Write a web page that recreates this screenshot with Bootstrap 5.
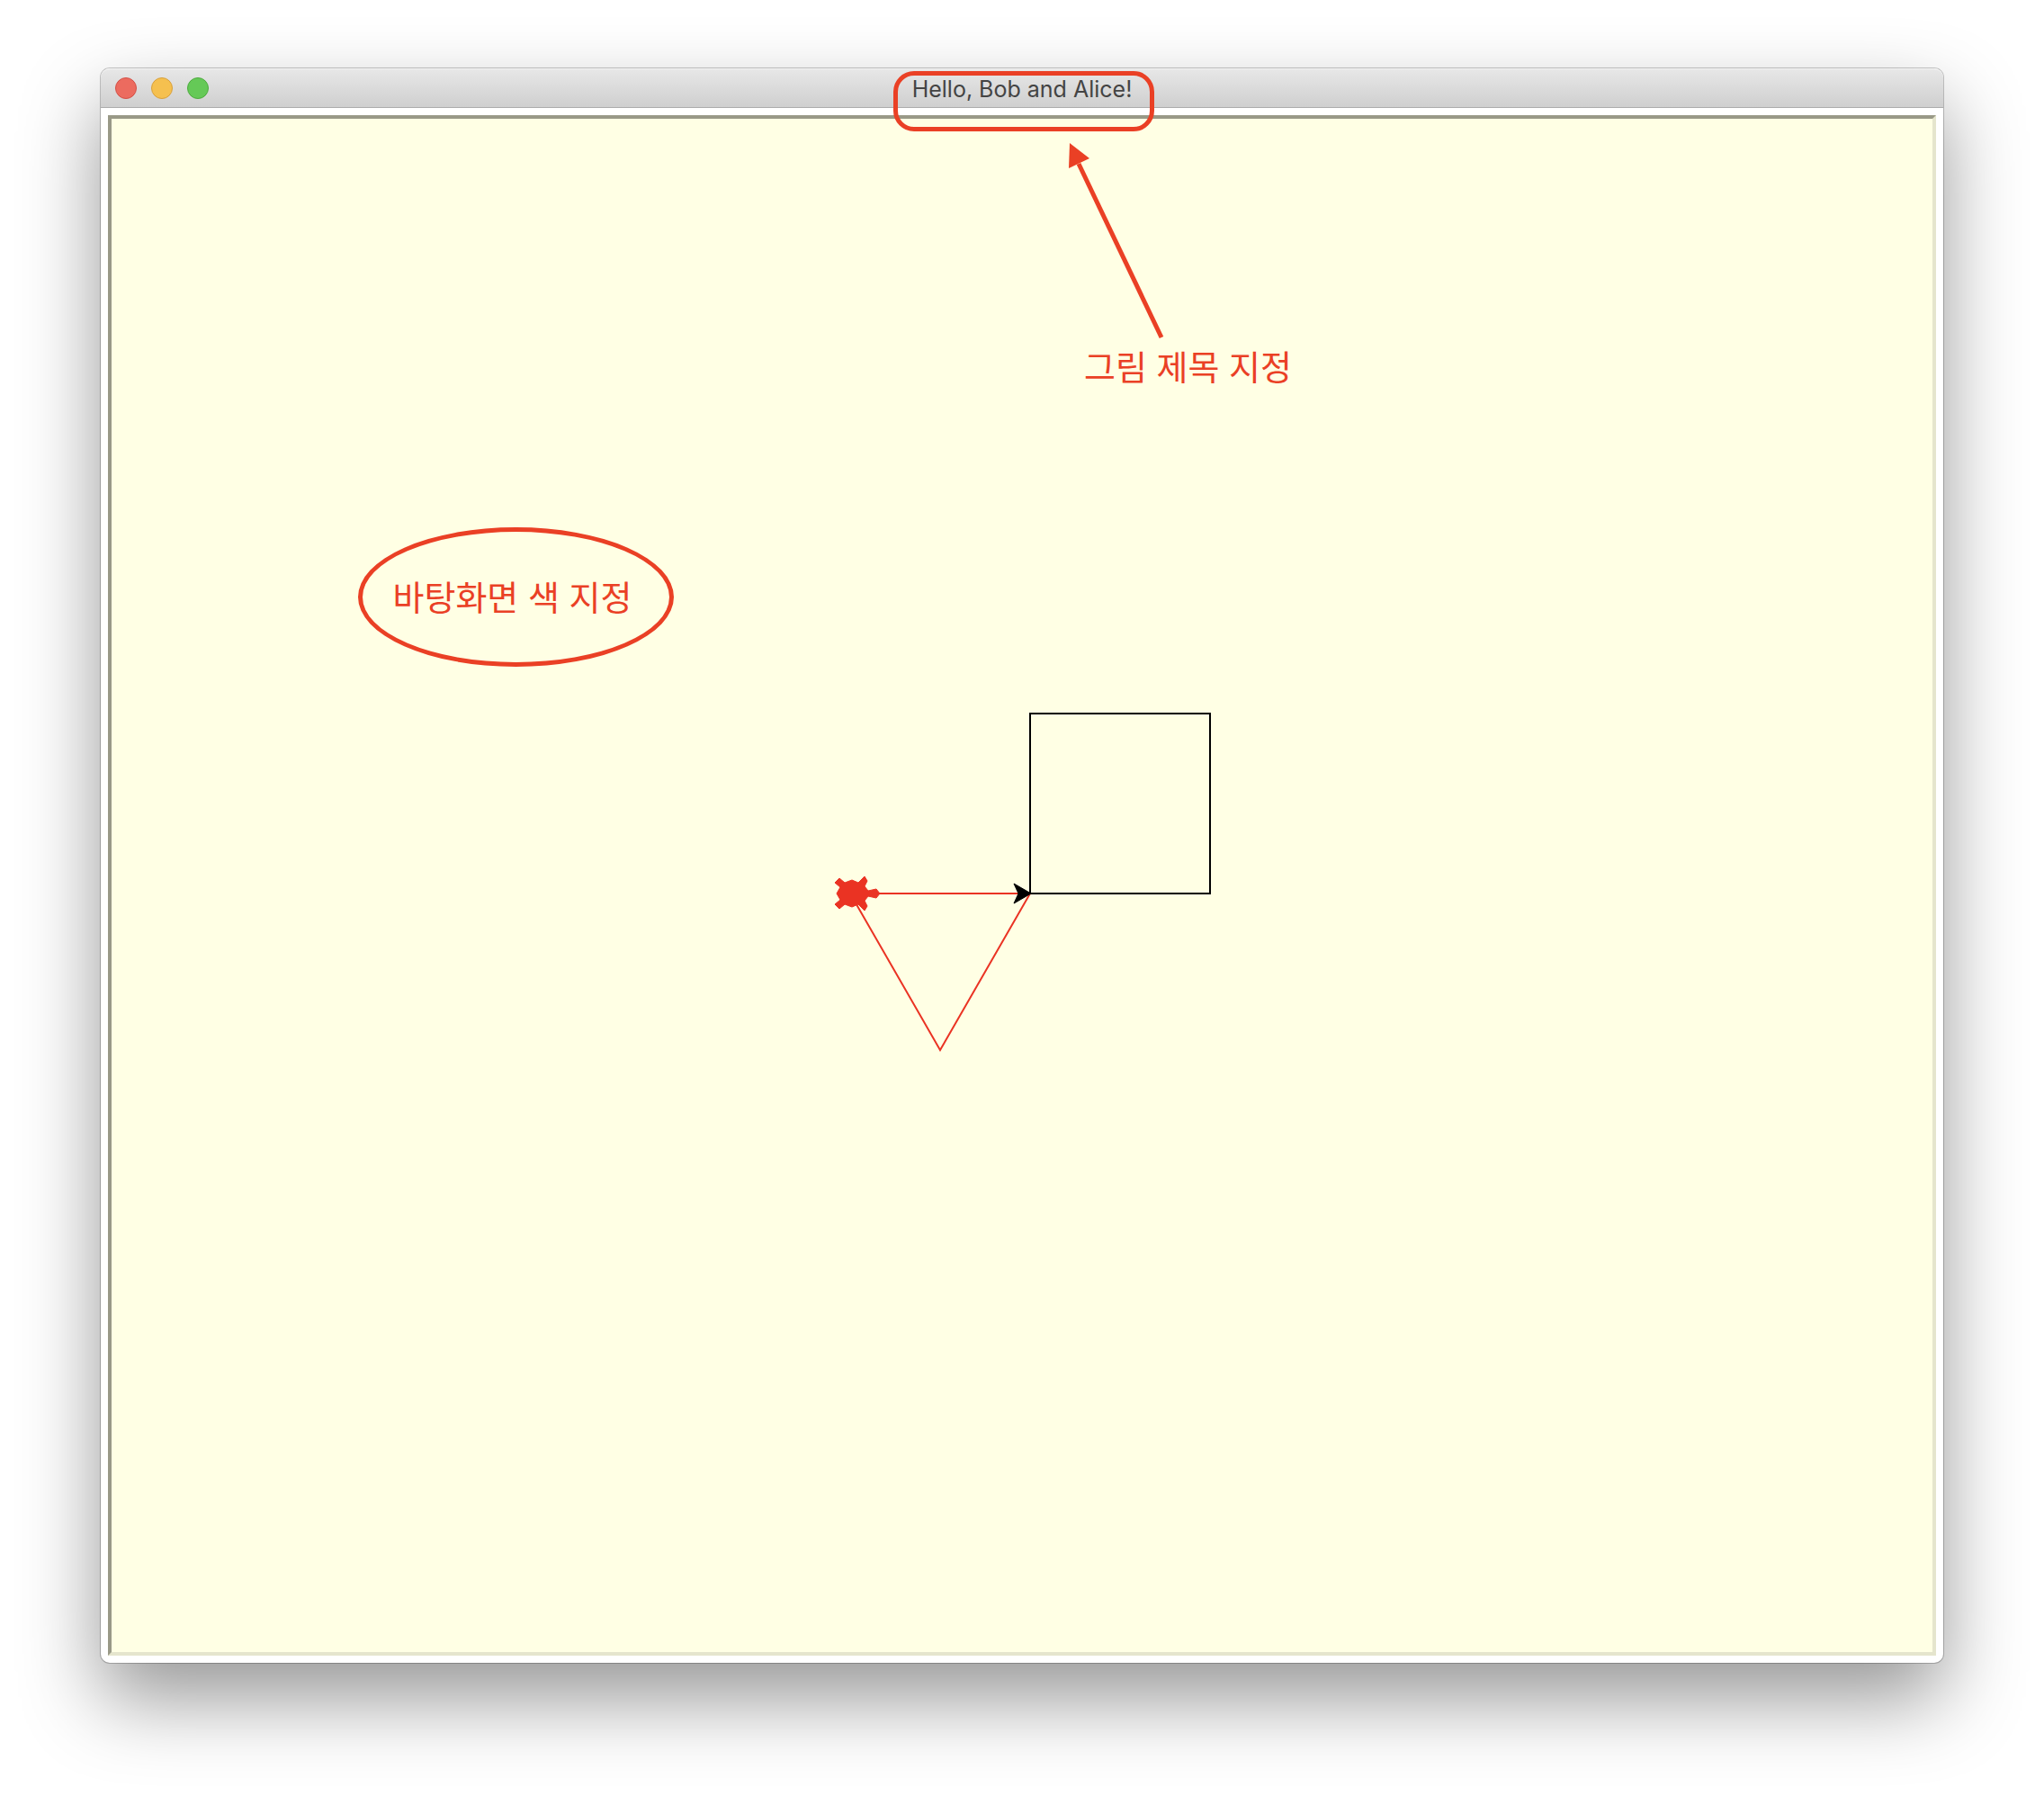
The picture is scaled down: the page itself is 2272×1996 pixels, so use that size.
<!DOCTYPE html>
<html lang="ko">
<head>
<meta charset="utf-8">
<meta name="viewport" content="width=device-width, initial-scale=1">
<title>Hello, Bob and Alice!</title>
<link href="https://cdn.jsdelivr.net/npm/bootstrap@5.3.0/dist/css/bootstrap.min.css" rel="stylesheet">
<style>
  :root { --note: #ea4025; }
  body { padding: 76px 112px 148px; background: #fff; font-family: Inter, "Noto Sans CJK KR", sans-serif; }
  .app-window { border-radius: 10px; background: #fff; box-shadow: 0 0 0 1px rgba(0,0,0,.22), 0 40px 88px rgba(0,0,0,.41); }
  .titlebar { height: 44px; padding: 0 16px; border-radius: 10px 10px 0 0; background: linear-gradient(#e7e7e7, #cfcfcf); border-top: 1px solid #f4f4f4; border-bottom: 1px solid #acacac; }
  .lights { gap: 16px; }
  .light { width: 24px; height: 24px; padding: 0; border: 1px solid; border-radius: 50%; }
  .light-close { background: #ec6b5f; border-color: #d35047; }
  .light-min { background: #f5c04f; border-color: #d8a03c; }
  .light-zoom { background: #65c957; border-color: #4dab3e; }
  .window-title { padding-top: 2px; font-size: 25px; line-height: 40px; font-weight: 400; color: #444; }
  .title-mark { z-index: 2; top: 2px; left: 50%; width: 290px; height: 67px; margin-left: -143px; border: 5px solid var(--note); border-radius: 23px; pointer-events: none; }
  .canvas-frame { margin: 8px; background: #ffffe4; border: 4px solid; border-color: #999987 #e5e5cd #e5e5cd #999987; }
  .note { color: var(--note); font: 400 38px/56px "Noto Sans CJK KR", sans-serif; white-space: nowrap; }
  .note-title { left: 1081px; top: 246px; }
  .note-color { left: 274px; top: 454px; width: 351px; height: 155px; padding: 0 8px 4px 0; border: 5px solid var(--note); border-radius: 50%; }
</style>
<script src="https://cdn.jsdelivr.net/npm/bootstrap@5.3.0/dist/js/bootstrap.bundle.min.js"></script>
</head>
<body class="min-vh-100 d-flex flex-column">
<main class="app-window flex-grow-1 d-flex flex-column position-relative">
  <header class="titlebar d-flex align-items-center justify-content-center position-relative">
    <div class="lights d-flex position-absolute start-0 ms-3">
      <button type="button" class="light light-close" aria-label="Close"></button>
      <button type="button" class="light light-min" aria-label="Minimize"></button>
      <button type="button" class="light light-zoom" aria-label="Zoom"></button>
    </div>
    <h1 class="window-title mb-0">Hello, Bob and Alice!</h1>
    <div class="title-mark position-absolute"></div>
  </header>
  <section class="canvas-frame flex-grow-1 position-relative">
    <svg class="position-absolute top-0 start-0 w-100 h-100" aria-hidden="true">
      <!-- turtle drawing, measured from the centre of the canvas -->
      <svg x="50%" y="50%" overflow="visible">
        <g transform="translate(9 9)">
          <path d="M0 0H-200L-100 174Z" fill="none" stroke="#ea3323" stroke-width="2"/>
          <path d="M0 0H200V-200H0Z" fill="none" stroke="#000" stroke-width="2"/>
          <path d="M1 0L-18 -11L-13 0L-18 11Z" fill="#000" stroke="#000" stroke-linejoin="round"/>
          <path d="M-167 0L-171 -5L-180 -3L-184 -8L-181 -14L-184 -19L-191 -12L-198 -15L-206 -12L-212 -17L-217 -12L-211 -7L-215 0L-211 7L-217 12L-212 17L-206 12L-198 15L-191 12L-184 19L-181 14L-184 8L-180 3L-171 5Z" fill="#ea3323" stroke="#ea3323" stroke-linejoin="round"/>
        </g>
      </svg>
      <g fill="#ea4025">
        <path d="M1075 50L1167 243" stroke="#ea4025" stroke-width="5"/>
        <path d="M1065 27L1087 44L1064 55Z"/>
      </g>
    </svg>
    <div class="note note-title position-absolute">그림 제목 지정</div>
    <div class="note note-color position-absolute d-flex align-items-center justify-content-center">바탕화면 색 지정</div>
  </section>
</main>
</body>
</html>
